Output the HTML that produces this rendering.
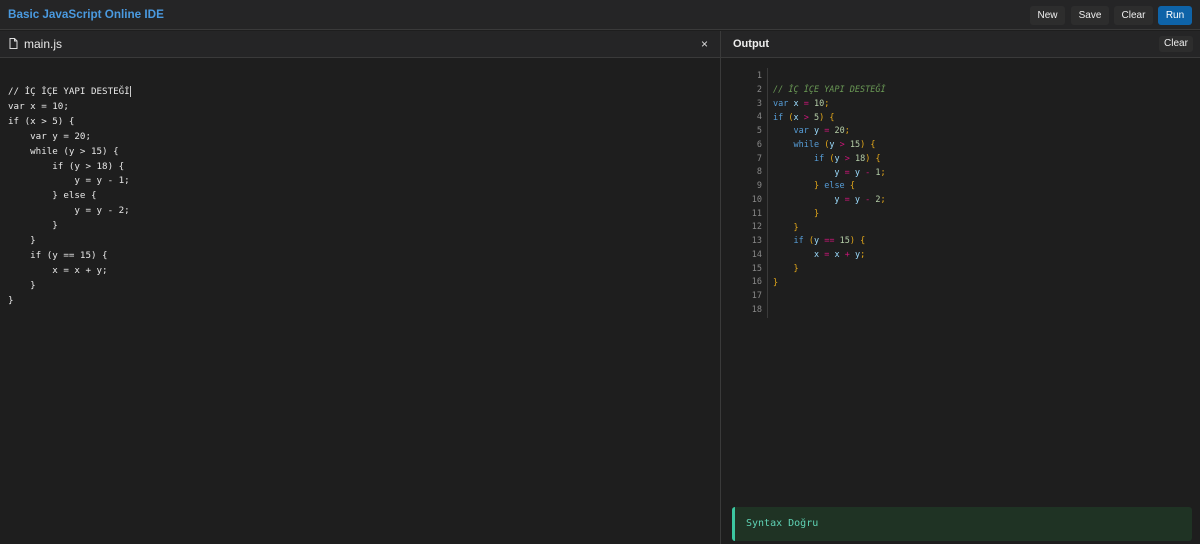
<!DOCTYPE html>
<html><head><meta charset="utf-8"><style>
*{margin:0;padding:0;box-sizing:border-box}
body{width:1200px;height:544px;background:#1e1e1e;font-family:"Liberation Sans",sans-serif;overflow:hidden;position:relative;color:#ddd}
.top{position:absolute;left:0;top:0;width:1200px;height:30px;background:#252526;border-bottom:1px solid #3a3a3a}
.title{position:absolute;left:8px;top:8px;font-size:11.7px;font-weight:bold;color:#4a9ae0}
.btn{position:absolute;top:6px;height:19px;border-radius:3px;background:#2d2d2d;color:#eee;font-size:10px;line-height:19px;text-align:center}
.ph{position:absolute;top:31px;height:27px;background:#252526;border-bottom:1px solid #3a3a3a}
.mono{font-family:"DejaVu Sans Mono","Liberation Mono",monospace;white-space:pre}
.ed{position:absolute;left:8px;top:85px;font-size:9.2px;line-height:14.9px;color:#e8e8e8}
.gut{position:absolute;left:740px;top:70px;width:22px;text-align:right;font-size:8.5px;line-height:13.76px;color:#888}
.oc{position:absolute;left:773px;top:84px;font-size:8.5px;line-height:13.76px;color:#ddd}
.k{color:#569cd6}.v{color:#9cdcfe}.o{color:#d0157a}.n{color:#b5cea8}.b{color:#e5a91a}.c{color:#6a9955;font-style:italic}
</style></head><body>
<div class="top"><div class="title">Basic JavaScript Online IDE</div>
<div class="btn" style="left:1030px;width:35px">New</div>
<div class="btn" style="left:1071px;width:38px">Save</div>
<div class="btn" style="left:1114px;width:39px">Clear</div>
<div class="btn" style="left:1158px;width:34px;background:#0e63a8;color:#fff">Run</div></div>
<div class="ph" style="left:0;width:720px">
<svg style="position:absolute;left:9px;top:7px" width="9" height="11" viewBox="0 0 9 11"><path d="M1 .5h4.5L8 3v7.5H1z M5.5 .5V3H8" fill="none" stroke="#ddd" stroke-width="1"/></svg>
<div style="position:absolute;left:24px;top:6px;font-size:12px;color:#e8e8e8">main.js</div>
<div style="position:absolute;left:701px;top:6px;font-size:12px;color:#ddd">×</div></div>
<div style="position:absolute;left:720px;top:31px;width:1px;height:513px;background:#3a3a3a"></div>
<div class="ph" style="left:721px;width:479px">
<div style="position:absolute;left:12px;top:7px;font-size:11px;font-weight:bold;color:#eee">Output</div>
<div class="btn" style="left:438px;top:5px;width:34px;height:16px;line-height:16px;font-size:10px">Clear</div></div>
<div class="ed mono">// İÇ İÇE YAPI DESTEĞİ<span style="border-left:1px solid #ccc"></span>
var x = 10;
if (x &gt; 5) {
    var y = 20;
    while (y &gt; 15) {
        if (y &gt; 18) {
            y = y - 1;
        } else {
            y = y - 2;
        }
    }
    if (y == 15) {
        x = x + y;
    }
}</div>
<div class="gut mono">1
2
3
4
5
6
7
8
9
10
11
12
13
14
15
16
17
18</div>
<div style="position:absolute;left:767px;top:68px;width:1px;height:250px;background:#3a3a3a"></div>
<div class="oc mono"><span class="c">// İÇ İÇE YAPI DESTEĞİ</span>
<span class="k">var</span> <span class="v">x</span> <span class="o">=</span> <span class="n">10</span><span class="b">;</span>
<span class="k">if</span> <span class="b">(</span><span class="v">x</span> <span class="o">&gt;</span> <span class="n">5</span><span class="b">)</span> <span class="b">{</span>
    <span class="k">var</span> <span class="v">y</span> <span class="o">=</span> <span class="n">20</span><span class="b">;</span>
    <span class="k">while</span> <span class="b">(</span><span class="v">y</span> <span class="o">&gt;</span> <span class="n">15</span><span class="b">)</span> <span class="b">{</span>
        <span class="k">if</span> <span class="b">(</span><span class="v">y</span> <span class="o">&gt;</span> <span class="n">18</span><span class="b">)</span> <span class="b">{</span>
            <span class="v">y</span> <span class="o">=</span> <span class="v">y</span> <span class="o">-</span> <span class="n">1</span><span class="b">;</span>
        <span class="b">}</span> <span class="k">else</span> <span class="b">{</span>
            <span class="v">y</span> <span class="o">=</span> <span class="v">y</span> <span class="o">-</span> <span class="n">2</span><span class="b">;</span>
        <span class="b">}</span>
    <span class="b">}</span>
    <span class="k">if</span> <span class="b">(</span><span class="v">y</span> <span class="o">==</span> <span class="n">15</span><span class="b">)</span> <span class="b">{</span>
        <span class="v">x</span> <span class="o">=</span> <span class="v">x</span> <span class="o">+</span> <span class="v">y</span><span class="b">;</span>
    <span class="b">}</span>
<span class="b">}</span></div>
<div style="position:absolute;left:732px;top:507px;width:460px;height:34px;background:#1f3324;border-left:3px solid #3cc6a0;border-radius:3px">
<div class="mono" style="position:absolute;left:11px;top:11px;font-size:10px;color:#5fd3b5">Syntax Doğru</div></div>
</body></html>
